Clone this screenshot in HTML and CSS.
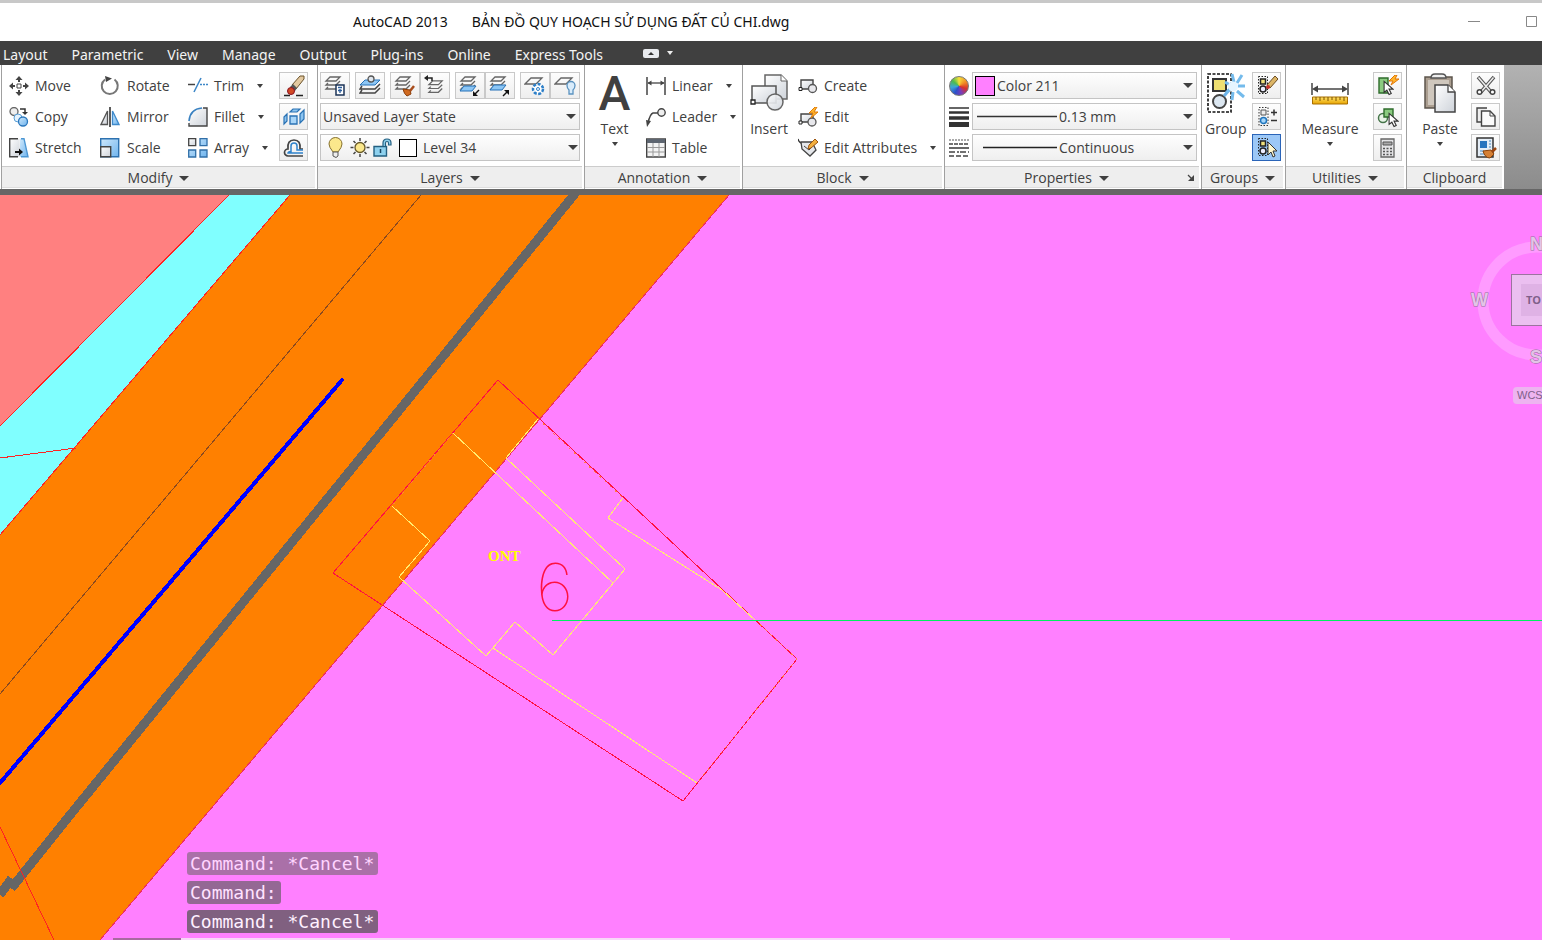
FILE: index.html
```html
<!DOCTYPE html>
<html lang="en">
<head>
<meta charset="utf-8">
<title>AutoCAD 2013</title>
<link rel="stylesheet" href="styles.css">
</head>
<body>
<svg class="defs" aria-hidden="true">
  <defs>
    <linearGradient id="gBlue" x1="0" y1="0" x2="1" y2="1"><stop offset="0" stop-color="#cfe8fb"/><stop offset="1" stop-color="#6fb4ee"/></linearGradient>
    <linearGradient id="gGrey" x1="0" y1="0" x2="1" y2="1"><stop offset="0" stop-color="#ffffff"/><stop offset="1" stop-color="#ced3da"/></linearGradient>
    <linearGradient id="gGold" x1="0" y1="0" x2="0" y2="1"><stop offset="0" stop-color="#ffe26a"/><stop offset="1" stop-color="#e8a400"/></linearGradient>
    <symbol id="sheets" viewBox="0 0 20 20"><path d="M6 2h10l-4 4H2zM4 8l-2 2h10l4-4M4 12l-2 2h10l4-4" fill="none" stroke="#666" stroke-width="1.300"/></symbol>
    <symbol id="cursor" viewBox="0 0 10 14"><path d="M1 1v10l2.500-2 2 4 2-1-2-4H9z" fill="#fff" stroke="#333"/></symbol>
    <symbol id="pick" viewBox="0 0 20 20"><path d="M2.500 1.500h9v17h-9z" fill="none" stroke="#222" stroke-dasharray="1.500 1.500"/><path d="M4.500 4h5v5h-5z" fill="#f0e07a" stroke="#222" stroke-width="1.500"/><circle cx="7" cy="14" r="3" fill="#eef" stroke="#222" stroke-width="1.500"/></symbol>
  </defs>
</svg>
<header class="titlebar">
  <h1 class="title"><span>AutoCAD 2013</span><span>BẢN ĐỒ QUY HOẠCH SỬ DỤNG ĐẤT CỦ CHI.dwg</span></h1>
  <div class="window-buttons">
    <button type="button" aria-label="Minimize"><svg width="12" height="12"><path d="M0 5.500h12" stroke="#888"/></svg></button>
    <button type="button" aria-label="Maximize"><svg width="12" height="12"><path d="M.5.500h10v10H.5z" fill="none" stroke="#888"/></svg></button>
  </div>
</header>
<nav class="tabs">
  <a href="#layout">Layout</a><a href="#parametric">Parametric</a><a href="#view">View</a><a href="#manage">Manage</a><a href="#output">Output</a><a href="#plugins">Plug-ins</a><a href="#online">Online</a><a href="#express">Express Tools</a>
  <button type="button" class="collapse" aria-label="Minimize ribbon"><svg width="16" height="9"><rect width="16" height="9" rx="2" fill="#e8eaee"/><path d="M5 6l3-3 3 3z" fill="#333"/></svg><i class="caret small"></i></button>
</nav>
<main class="workspace">
<div class="ribbon">
  <section class="panel modify">
    <div class="body">
      <div class="column">
        <button type="button" class="tool"><svg width="20" height="20"><path d="M10 3v3M10 14v3M3 10h3M14 10h3" stroke="#444" stroke-width="2"/><path d="M10 0l3.500 4h-7zM10 20l3.500-4h-7zM0 10l4-3.500v7zM20 10l-4-3.500v7z" fill="#444"/><path d="M8 8h4v4H8z" fill="#fff" stroke="#444"/></svg>Move</button>
        <button type="button" class="tool"><svg width="20" height="20"><circle cx="5" cy="4.500" r="4" fill="#eee" stroke="#666" stroke-width="1.300"/><circle cx="9" cy="11" r="4" fill="#e4f2fd" stroke="#5a9fd6"/><circle cx="14" cy="14.500" r="4.500" fill="url(#gBlue)" stroke="#2c78bd" stroke-width="1.300"/><path d="M11 2h5v4" fill="none" stroke="#333" stroke-width="1.500"/><path d="M13 5h6l-3 3z" fill="#333"/></svg>Copy</button>
        <button type="button" class="tool"><svg width="20" height="20"><path d="M.7.700h10v18H.7z" fill="url(#gGrey)"/><path d="M9 .7H.7v18H9" fill="none" stroke="#444" stroke-width="1.400"/><path d="M11 .7h4l4 18h-8z" fill="url(#gBlue)"/><path d="M12 .7h3l4 18h-7" fill="none" stroke="#4c97d4" stroke-width="1.400"/><path d="M6 14h5" stroke="#111" stroke-width="2"/><path d="M10 10.500l4 3.500-4 3.500z" fill="#111"/></svg>Stretch</button>
      </div>
      <div class="column">
        <button type="button" class="tool"><svg width="20" height="20"><path d="M5 3.500A8 8 0 1 0 14.500 3.500" fill="none" stroke="#777" stroke-width="2"/><path d="M5 0l7 2.500-6 3.500z" fill="#444"/></svg>Rotate</button>
        <button type="button" class="tool"><svg width="20" height="20"><path d="M7.500 4v13.500H1z" fill="url(#gGrey)" stroke="#555" stroke-width="1.300"/><path d="M12.500 4v13.500H19z" fill="url(#gBlue)" stroke="#3f8acb" stroke-width="1.300"/><path d="M10 0v20" stroke="#333" stroke-width="1.600"/></svg>Mirror</button>
        <button type="button" class="tool"><svg width="20" height="20"><path d="M.7.700h18v18H.7z" fill="url(#gBlue)" stroke="#2e72b0" stroke-width="1.400"/><path d="M.7 8.700h10v10H.7z" fill="url(#gGrey)" stroke="#444" stroke-width="1.400"/></svg>Scale</button>
      </div>
      <div class="column">
        <button type="button" class="tool"><svg width="20" height="20"><path d="M0 8.500h7" stroke="#444" stroke-width="1.500"/><path d="M6 16L13 2" stroke="#3d87c8" stroke-width="1.500"/><path d="M12 8.500h8" stroke="#3d87c8" stroke-width="1.500" stroke-dasharray="2 1"/></svg>Trim<i class="caret small"></i></button>
        <button type="button" class="tool"><svg width="20" height="20"><path d="M1 19V15Q1 1 15 1h4v18z" fill="url(#gGrey)"/><path d="M1 14Q2 2 14 1" fill="none" stroke="#3981c1" stroke-width="1.600"/><path d="M15 1h4v18H1v-3" fill="none" stroke="#444" stroke-width="1.400"/></svg>Fillet<i class="caret small"></i></button>
        <button type="button" class="tool"><svg width="20" height="20"><path d="M.7.700h7v7h-7z" fill="url(#gGrey)" stroke="#444" stroke-width="1.300"/><path d="M12 .7h7v7h-7zM.7 12h7v7h-7zM12 12h7v7h-7z" fill="url(#gBlue)" stroke="#316fa8" stroke-width="1.300"/></svg>Array<i class="caret small"></i></button>
      </div>
      <div class="column squares">
        <button type="button" class="square" aria-label="Erase"><svg width="22" height="22"><path d="M1 20.500h6M13 20.500h7" stroke="#222" stroke-width="1.300"/><path d="M17 1h4v3l-8 10-4-4z" fill="#e3c9a0" stroke="#6a522a"/><path d="M10 9l4 4-2 3-5-4z" fill="#555"/><circle cx="8" cy="16" r="3.500" fill="#d24a24" stroke="#812"/></svg></button>
        <button type="button" class="square" aria-label="Explode"><svg width="22" height="22"><path d="M7 10h7v8H7z" fill="#a8d5f8" stroke="#2a72b4" stroke-width="1.300"/><path d="M7 6l3-3h7l-3 3zM1 11l3-3v7l-3 3zM17 8l4-4v9l-4 4z" fill="#8cc4f0" stroke="#2a72b4" stroke-width="1.200"/></svg></button>
        <button type="button" class="square" aria-label="Offset"><svg width="22" height="22"><path d="M20 19H5a3.500 3.500 0 0 1 0-7q-1-9 6-9t6 9h3" fill="none" stroke="#444" stroke-width="1.700"/><path d="M20 16H5q0-1 3-1.500V9q0-3 3-3t3 3v4h6" fill="none" stroke="#2f83cb" stroke-width="1.500"/></svg></button>
      </div>
    </div>
    <button type="button" class="caption">Modify<i class="caret"></i></button>
  </section>

  <section class="panel layers">
    <div class="body stack">
      <div class="strip">
        <div class="group"><button type="button" class="square" aria-label="Layer properties"><svg width="22" height="22"><use href="#sheets" width="20" height="20"/><path d="M12 10h8v10h-8z" fill="#fff" stroke="#1c3558" stroke-width="1.500"/><path d="M14 12.500h4M14 15.500h4M16 14v4" stroke="#2a5d9b" stroke-width="1.300"/></svg></button></div>
        <div class="group"><button type="button" class="square" aria-label="Make current"><svg width="22" height="22"><path d="M6 5h15l-5 5H1z" fill="#8cc6f5" stroke="#2571b7"/><circle cx="12" cy="4" r="3" fill="#dfe6ee" stroke="#555" stroke-width="1.300"/><path d="M3 11l-2 3h15l5-5M3 15l-2 3h15l5-5" fill="none" stroke="#444" stroke-width="1.500"/></svg></button></div>
        <div class="group">
          <button type="button" class="square" aria-label="Match layer"><svg width="22" height="22"><use href="#sheets" width="20" height="20"/><path d="M9 14l7 1 1 4-4 2q-3-2-4-7z" fill="#d06a20" stroke="#8a3d0a"/><path d="M16 16l4-5" stroke="#a84c1c" stroke-width="2.500"/></svg></button>
          <button type="button" class="square" aria-label="Layer previous"><svg width="22" height="22"><use href="#sheets" x="3" y="4" width="19" height="19"/><path d="M3 3h5v3" fill="none" stroke="#222" stroke-width="1.500"/><path d="M0 3l4-3v6z" fill="#222"/></svg></button>
        </div>
        <div class="group">
          <button type="button" class="square" aria-label="Isolate"><svg width="22" height="22"><use href="#sheets" width="20" height="20"/><path d="M5 11h12l-4 5H1z" fill="#8cc6f5" stroke="#2571b7"/><path d="M20 15l-4 4" stroke="#111" stroke-width="1.500"/><path d="M14 21v-5l5 5z" fill="#111"/></svg></button>
          <button type="button" class="square" aria-label="Unisolate"><svg width="22" height="22"><use href="#sheets" width="20" height="20"/><path d="M5 10h12l-4 5H1z" fill="#8cc6f5" stroke="#2571b7"/><path d="M14 21l4-4" stroke="#111" stroke-width="1.500"/><path d="M20 15v5l-5-5z" fill="#111"/></svg></button>
        </div>
        <div class="group">
          <button type="button" class="square" aria-label="Freeze"><svg width="22" height="22"><path d="M7 3h11l-6 6H1z" fill="none" stroke="#666" stroke-width="1.300"/><circle cx="14" cy="14" r="5" fill="#fff" stroke="#2d7fc8" stroke-width="2.500" stroke-dasharray="3 1.500"/><circle cx="14" cy="14" r="1.500" fill="none" stroke="#2d7fc8"/></svg></button>
          <button type="button" class="square" aria-label="Layer off"><svg width="22" height="22"><path d="M7 3h11l-6 6H1z" fill="none" stroke="#666" stroke-width="1.300"/><path d="M15 15q-2-2-2-4.500a4 4 0 0 1 8 0q0 2.500-2 4.500v4h-4z" fill="#d9ecfb" stroke="#5b93c0" stroke-width="1.300"/></svg></button>
        </div>
      </div>
      <div class="combo"><select aria-label="Layer state"><option>Unsaved Layer State</option></select><i class="caret"></i></div>
      <div class="combo layer"><svg width="64" height="22"><path d="M5 15Q1 10 1 7a6.500 6.500 0 0 1 13 0q0 3-4 8z" fill="#fbe88c" stroke="#85702e"/><path d="M5 15h5v4l-2 1.500L5 19z" fill="#eee" stroke="#555"/><circle cx="32" cy="10.500" r="5" fill="#fbe88c" stroke="#665828" stroke-width="1.300"/><path d="M32 1v3M32 17v3M22.500 10.500h3M38.500 10.500h3M25.500 4l2 2M36.500 15l2 2M25.500 17l2-2M36.500 6l2-2" stroke="#444" stroke-width="1.500"/><path d="M46 9.500h12.500v9.500H46z" fill="#8ed1ee" stroke="#235f80" stroke-width="1.400"/><path d="M55 9V6q0-4 4-4t4 4v2h-2.500V6q0-1.500-1.500-1.500T57.500 6v3" fill="#8ed1ee" stroke="#235f80" stroke-width="1.200"/><path d="M52.500 12v4" stroke="#1b4660" stroke-width="1.500"/></svg><span class="swatch white"></span><select aria-label="Layer"><option>Level 34</option></select><i class="caret"></i></div>
    </div>
    <button type="button" class="caption">Layers<i class="caret"></i></button>
  </section>

  <section class="panel annotation">
    <div class="body">
      <button type="button" class="big"><span class="picture letter" aria-hidden="true">A</span>Text<i class="caret small"></i></button>
      <div class="column">
        <button type="button" class="tool"><svg width="20" height="20"><path d="M1 1v18M19 1v18" stroke="#444" stroke-width="1.500"/><path d="M2 7h16" stroke="#444" stroke-width="1.300"/><path d="M1.500 7l4-2.500v5zM18.500 7l-4-2.500v5z" fill="#444"/></svg>Linear<i class="caret small"></i></button>
        <button type="button" class="tool"><svg width="20" height="20"><path d="M2 16q2-9 5-10h5" fill="none" stroke="#444" stroke-width="1.500"/><path d="M0 13l5 1-4 6z" fill="#444"/><circle cx="15.500" cy="5.500" r="3.700" fill="#eee" stroke="#444" stroke-width="1.400"/></svg>Leader<i class="caret small"></i></button>
        <button type="button" class="tool"><svg width="20" height="20"><path d="M.7 1h18.600v18H.7z" fill="#f3f3f3" stroke="#444" stroke-width="1.400"/><path d="M1 1h18v4H1z" fill="#5d6570"/><path d="M1 9.500h18M1 14h18M7 5v14M13 5v14" stroke="#999"/></svg>Table</button>
      </div>
    </div>
    <button type="button" class="caption">Annotation<i class="caret"></i></button>
  </section>

  <section class="panel block">
    <div class="body">
      <button type="button" class="big"><svg class="picture" width="38" height="44"><path d="M15 3h16l6 6v18H15z" fill="url(#gGrey)" stroke="#666" stroke-width="1.500"/><path d="M31 3v6h6" fill="#fff" stroke="#666"/><path d="M2 14h24v17H2z" fill="url(#gGrey)" stroke="#555" stroke-width="1.500"/><circle cx="25" cy="30" r="8" fill="url(#gGrey)" fill-opacity=".9" stroke="#666" stroke-width="1.500"/><path d="M1 28h4v4H1z" fill="#fff" stroke="#222" stroke-width="1.300"/></svg>Insert</button>
      <div class="column">
        <button type="button" class="tool"><svg width="20" height="20"><path d="M3 4h12v9H3z" fill="url(#gGrey)" stroke="#444" stroke-width="1.400"/><circle cx="14.500" cy="12.500" r="4" fill="#e8e8ec" stroke="#555" stroke-width="1.300"/><path d="M1 11.500h3v3H1z" fill="#fff" stroke="#222"/></svg>Create</button>
        <button type="button" class="tool"><svg width="20" height="20"><path d="M3 7h12v8H3z" fill="url(#gGrey)" stroke="#444" stroke-width="1.400"/><circle cx="14" cy="15" r="4" fill="#e8e8ec" stroke="#555" stroke-width="1.300"/><path d="M1 14h3v3H1z" fill="#fff" stroke="#222"/><path d="M17 0l-6 6h4l-2 5 7-6h-4l3-5z" fill="#ffb52c" stroke="#de7b0c"/></svg>Edit</button>
        <button type="button" class="tool"><svg width="20" height="20"><path d="M0 1q1 4 5 5" fill="none" stroke="#333" stroke-width="1.400"/><path d="M3 4h11l4 8-6 6-8-7z" fill="#e5e7eb" stroke="#444" stroke-width="1.300"/><path d="M6 8l5 4 3-3" fill="none" stroke="#444"/><path d="M17 1l3 3-7 6-3 1 1-4z" fill="#f2af3e" stroke="#9c5510"/></svg>Edit Attributes<i class="caret small"></i></button>
      </div>
    </div>
    <button type="button" class="caption">Block<i class="caret"></i></button>
  </section>

  <section class="panel properties">
    <div class="body stack">
      <div class="property"><span class="wheel"></span><div class="combo"><span class="swatch pink"></span><select aria-label="Color"><option>Color 211</option></select><i class="caret"></i></div></div>
      <div class="property"><svg width="20" height="20"><path d="M0 1h20" stroke="#333" stroke-width="1.500"/><path d="M0 5.500h20" stroke="#333" stroke-width="2.500"/><path d="M0 11h20" stroke="#333" stroke-width="3.500"/><path d="M0 17.500h20" stroke="#333" stroke-width="5"/></svg><div class="combo"><svg width="84" height="3"><path d="M2 1.500h80" stroke="#333" stroke-width="1.500"/></svg><select aria-label="Lineweight"><option>0.13 mm</option></select><i class="caret"></i></div></div>
      <div class="property"><svg width="20" height="20"><path d="M0 2h20" stroke="#555" stroke-dasharray="2 1"/><path d="M0 6h20" stroke="#444" stroke-width="1.500" stroke-dasharray="4 1"/><path d="M0 10h20" stroke="#333" stroke-width="1.500"/><path d="M0 14h20" stroke="#444" stroke-width="1.500" stroke-dasharray="6 2 2 1"/><path d="M0 18h20" stroke="#444" stroke-width="1.500" stroke-dasharray="5 2"/></svg><div class="combo"><svg width="84" height="3"><path d="M8 1.500h74" stroke="#222" stroke-width="1.500"/></svg><select aria-label="Linetype"><option>Continuous</option></select><i class="caret"></i></div></div>
    </div>
    <div class="caption"><button type="button" class="caption-label">Properties<i class="caret"></i></button><button type="button" class="launcher" aria-label="Properties dialog"><svg width="8" height="8"><path d="M1 1l4 4" stroke="#444" stroke-width="1.300"/><path d="M7 1v6H1z" fill="#444"/></svg></button></div>
  </section>

  <section class="panel groups">
    <div class="body">
      <button type="button" class="big"><svg class="picture" width="40" height="44"><path d="M2 2h23v38H2z" fill="none" stroke="#111" stroke-width="1.600" stroke-dasharray="3 1.500"/><path d="M7 7h13v12H7z" fill="#eedf72" stroke="#333" stroke-width="2"/><circle cx="13.500" cy="29.500" r="6.500" fill="#dce7f1" stroke="#444" stroke-width="2"/><path d="M18 24l6-7" stroke="#6bb2e8" stroke-width="3"/><path d="M26 2l2 8M36 3l-5 8M39 14h-7M38 25l-7-6M26 28l1-8M20 21l4-4M19 10l5 3" stroke="#74bbec" stroke-width="3"/><circle cx="27" cy="14.500" r="5" fill="#e6f5ff"/></svg>Group</button>
      <div class="column squares">
        <button type="button" class="square" aria-label="Ungroup"><svg width="22" height="22"><use href="#pick" width="20" height="20"/><path d="M19 1l3 3-8 9-3-3z" fill="#dcb566" stroke="#6b4c22"/><circle cx="12" cy="12" r="2" fill="#c8312a"/></svg></button>
        <button type="button" class="square" aria-label="Group edit"><svg width="22" height="22"><path d="M3 1.500h9v18H3z" fill="none" stroke="#333" stroke-dasharray="1.500 1.500"/><path d="M5 4h5v5H5z" fill="#eee" stroke="#555"/><circle cx="7.500" cy="14.500" r="3" fill="#a4d5fa" stroke="#1f75bd" stroke-width="1.500"/><path d="M15 6.500h6M18 3.500v6M15 14.500h6" stroke="#333" stroke-width="1.500"/></svg></button>
        <button type="button" class="square active" aria-label="Group selection"><svg width="22" height="22"><use href="#pick" width="20" height="20"/><path d="M12 5v13l3-3 2 5 2-1-2-5h4z" fill="#fff8cf" stroke="#333"/></svg></button>
      </div>
    </div>
    <button type="button" class="caption">Groups<i class="caret"></i></button>
  </section>

  <section class="panel utilities">
    <div class="body">
      <button type="button" class="big"><svg class="picture" width="40" height="44"><path d="M2 11v12M38 11v12" stroke="#444" stroke-width="1.500"/><path d="M4 17h32" stroke="#444" stroke-width="1.500"/><path d="M2 17l6-3.500v7zM38 17l-6-3.500v7z" fill="#444"/><path d="M2.500 25h35v7h-35z" fill="url(#gGold)" stroke="#a86e00"/><path d="M6 25v3M10 25v4M14 25v3M18 25v4M22 25v3M26 25v4M30 25v3M34 25v4" stroke="#7d5200"/></svg>Measure<i class="caret small"></i></button>
      <div class="column squares">
        <button type="button" class="square" aria-label="Quick select"><svg width="22" height="22"><path d="M2 3h9v15H2z" fill="#8bcb80" stroke="#2e6c2b" stroke-width="1.400"/><path d="M18 0l-6 6h4l-2 4 8-6h-4l2-4z" fill="#ffb52c" stroke="#e07505"/><use href="#cursor" x="6" y="5" width="11" height="16"/></svg></button>
        <button type="button" class="square" aria-label="Select all"><svg width="22" height="22"><circle cx="6" cy="12" r="4.500" fill="#e9f4e8" stroke="#46754a" stroke-width="1.500"/><path d="M7 3h9v8H7z" fill="#8bcb80" stroke="#2e6c2b" stroke-width="1.400"/><use href="#cursor" x="11" y="6" width="11" height="16"/></svg></button>
        <button type="button" class="square" aria-label="Calculator"><svg width="22" height="22"><path d="M4 2h13v18H4z" fill="#e4e4e6" stroke="#666" stroke-width="1.300"/><path d="M6 5h9v3H6z" fill="#aaa" stroke="#555"/><path d="M6 11.500h9M6 14.500h9M6 17.500h9" stroke="#555" stroke-width="1.600" stroke-dasharray="2 1.500"/></svg></button>
      </div>
    </div>
    <button type="button" class="caption">Utilities<i class="caret"></i></button>
  </section>

  <section class="panel clipboard">
    <div class="body">
      <button type="button" class="big"><svg class="picture" width="34" height="44"><path d="M2 5h27v31H2z" fill="#ab9e90" stroke="#5d554c" stroke-width="1.500"/><path d="M5 8h21v25H5z" fill="#cfc7bd"/><path d="M8 6q0-4 4-4h7q4 0 4 4z" fill="#eee" stroke="#555" stroke-width="1.500"/><path d="M12 13h13l7 7v20H12z" fill="url(#gGrey)" stroke="#444" stroke-width="1.500"/><path d="M25 13v7h7" fill="#fff" stroke="#444" stroke-width="1.300"/></svg>Paste<i class="caret small"></i></button>
      <div class="column squares">
        <button type="button" class="square" aria-label="Cut"><svg width="22" height="22"><path d="M3 2l13 15M19 2L6 17" stroke="#555" stroke-width="3.500"/><path d="M3.500 2.500l12 14M18.500 2.500l-12 14" stroke="#eee" stroke-width="1.500"/><circle cx="4.500" cy="17" r="2.300" fill="#fff" stroke="#444" stroke-width="1.500"/><circle cx="17.500" cy="17" r="2.300" fill="#fff" stroke="#444" stroke-width="1.500"/></svg></button>
        <button type="button" class="square" aria-label="Copy clip"><svg width="22" height="22"><path d="M12 2H2v14h4" fill="#eee" stroke="#444" stroke-width="1.400"/><path d="M6.500 5H15l5 5v10H6.500z" fill="#fafafa" stroke="#444" stroke-width="1.400"/><path d="M15 5v5h5" fill="none" stroke="#444"/></svg></button>
        <button type="button" class="square" aria-label="Match properties"><svg width="22" height="22"><path d="M2 1h16v19H2z" fill="#e4edf6" stroke="#333" stroke-width="1.500"/><path d="M5 4h7v7H5z" fill="#2874bd"/><path d="M14 4h2M14 7h2M14 10h2M5 14h4M5 17h4" stroke="#4785bb"/><path d="M8 14l8-1 3 4-4 4q-5 0-7-7z" fill="#d58035" stroke="#8a4209"/><path d="M17 15l4-4" stroke="#9c4510" stroke-width="2.500"/></svg></button>
      </div>
    </div>
    <button type="button" class="caption">Clipboard</button>
  </section>
  <div class="ribbon-rest"></div>
</div>

<div class="canvas">
  <svg class="map" viewBox="0 195 1542 745" preserveAspectRatio="xMinYMin slice" role="img" aria-label="Land use plan">
    <g shape-rendering="crispEdges">
      <rect y="195" width="1542" height="745" fill="#ff80ff"/>
      <path d="M0 195h230L0 427z" fill="#ff8080"/>
      <path d="M229 195h61L0 535V426z" fill="#80ffff"/>
      <path d="M290 195h439L100 940H0V535z" fill="#ff8000"/>
      <g fill="none" stroke="#f22" stroke-width="1">
        <path d="M229 195L0 426M290 195L0 535M0 458l76-10"/>
        <path d="M729 195L100 940" stroke="#f0305a"/>
      </g>
      <path d="M421 195L0 694" stroke="#8a4a20" fill="none"/>
      <path d="M582 185L432 370 66 820 14 885 9 882 0 895" stroke="#666" stroke-width="9" fill="none"/>
      <path d="M0 827l54 113" stroke="#f22" fill="none"/>
      <path d="M342 380L0 783" stroke="#00f" stroke-width="4" stroke-linecap="round" fill="none"/>
      <path d="M498 380L797 659 683 801 333 573z" stroke="#ff1040" fill="none"/>
      <path d="M453 433l160 150M538 419l-32 39 119 111-72 86-38-33-29 34-87-79 31-36-38-35M493 648l204 135M623 498l-15 20 114 72 33 30" stroke="#ffee70" fill="none"/>
      <path d="M538 419l85 79M797 659L697 783M755 620l42 39M453 433l-61 73" stroke="#ff8040" stroke-dasharray="2 5" fill="none"/>
      <path d="M552 620.500h990" stroke="#00f060" stroke-width="1" fill="none"/>
    </g>
    <text x="488" y="561" class="zone">ONT</text>
    <text x="536" y="611" class="parcel">6</text>
  </svg>
  <svg class="viewcube" width="82" height="180" viewBox="1460 235 82 180" role="img" aria-label="View cube">
    <circle cx="1537" cy="301" r="54" fill="none" stroke="#ff9bff" stroke-width="11"/>
    <rect x="1511.500" y="274.500" width="50" height="51" fill="#ebbff0" stroke="#9b739f"/>
    <rect x="1521" y="284" width="40" height="32" fill="#dfb2e5"/>
    <text x="1526" y="304" class="face">TO</text>
    <text x="1530" y="250" class="compass">N</text>
    <text x="1471" y="306" class="compass">W</text>
    <text x="1530" y="363" class="compass">S</text>
    <rect x="1513" y="387" width="34" height="17" rx="4" fill="#edb4f0"/>
    <text x="1517" y="399" class="wcs">WCS</text>
  </svg>
  <div class="history">
    <p class="old">Command: *Cancel*</p>
    <p class="mid">Command:</p>
    <p>Command: *Cancel*</p>
  </div>
  <div class="command-edge"></div>
</div>
</main>
</body>
</html>
```
FILE: styles.css
```css
* { box-sizing: border-box; }
body {
  margin: 0;
  height: 100vh;
  display: flex;
  flex-direction: column;
  overflow: hidden;
  font: 14px/20px "Open Sans", "Noto Sans", sans-serif;
  color: #404040;
}
button, select { font: inherit; color: inherit; border: 0; padding: 0; margin: 0; background: none; }
svg { display: block; flex: none; }
.defs { position: absolute; width: 0; height: 0; }

.titlebar {
  display: flex;
  align-items: center;
  justify-content: space-between;
  height: 41px;
  flex: none;
  border-top: 3px solid #c8c8c8;
  background: #fff;
  padding-left: 353px;
}
.title { display: flex; gap: 24px; margin: 0; font: 400 14px/20px "Noto Sans", sans-serif; color: #111; white-space: nowrap; }
.window-buttons { display: flex; gap: 46px; padding-right: 4px; }

.tabs { display: flex; align-items: center; gap: 24px; height: 24px; flex: none; padding: 3px 3px 0; background: #404040; font-family: "Noto Sans", sans-serif; }
.tabs a { color: #f4f4f4; text-decoration: none; white-space: nowrap; }
.collapse { display: flex; align-items: center; gap: 8px; padding: 0 0 3px 16px; color: #eee; }

.workspace { flex: 1; display: flex; flex-direction: column; min-height: 0; }
.ribbon { display: flex; flex: none; height: 130px; border-bottom: 6px solid #666; background: #fff; }
.panel { display: flex; flex-direction: column; flex: none; border-left: 1px solid #a0a0a0; padding-bottom: 1px; }
.modify { width: 316px; margin-left: 1px; }
.layers { width: 267px; }
.annotation { width: 158px; }
.block { width: 202px; }
.properties { width: 257px; }
.groups { width: 84px; }
.utilities { width: 121px; }
.clipboard { width: 98px; }
.ribbon-rest { flex: 1; background: linear-gradient(#b2b2b2, #8c8c8c); }

.body { display: flex; flex: 1; padding: 5px 4px 0; }
.stack { flex-direction: column; gap: 4px; padding: 7px 4px 0 2px; }
.column { display: grid; grid-template-rows: repeat(3, 31px); align-items: center; justify-items: start; }
.squares { margin-left: auto; }
.tool { display: flex; align-items: center; gap: 6px; white-space: nowrap; }
.tool .caret { margin-left: 7px; }
.modify .body { padding: 5px 9px 0 7px; }
.modify .column:nth-child(1) { width: 91px; }
.modify .column:nth-child(2) { width: 88px; }
.modify .column:nth-child(2) .tool { gap: 7px; }

.caret { width: 0; height: 0; flex: none; border: 5px solid transparent; border-top-color: currentColor; border-bottom: 0; }
.caret.small { border-width: 4px 3px 0; }
.caption {
  display: flex;
  align-items: center;
  justify-content: center;
  gap: 7px;
  height: 22px;
  padding-top: 2px;
  border-top: 1px solid #ccc;
  border-bottom: 1px solid #ddd;
  background: #eee;
  margin-right: 2px;
}
.caption-label { display: flex; align-items: center; gap: 7px; margin: 0 auto; padding-left: 8px; }
.launcher { padding-right: 4px; }

.square {
  display: grid;
  place-items: center;
  width: 29px;
  height: 27px;
  border: 1px solid #c9c9c9;
  background: linear-gradient(#fdfdfd, #eee);
}
.square.active { border-color: #2a64b8; background: #9cc8f7; }
.strip { display: flex; gap: 5px; height: 27px; }
.strip .square { width: 30px; }
.group { display: flex; }

.combo {
  display: flex;
  align-items: center;
  flex: 1;
  height: 27px;
  max-height: 27px;
  min-width: 0;
  border: 1px solid #c4c4c4;
  background: linear-gradient(#fefefe, #efefef);
  padding: 0 3px 0 2px;
}
.combo select { flex: 1; min-width: 0; height: 25px; appearance: none; }
.combo.layer { padding: 0 1px 0 7px; }
.stack > .combo { flex: none; }
.swatch { flex: none; width: 20px; height: 20px; border: 1px solid #000; }
.swatch.white { width: 18px; height: 18px; background: #fff; margin: 0 6px 0 7px; }
.swatch.pink { background: #ff80ff; margin-right: 2px; }
.property { display: flex; align-items: center; gap: 3px; padding-left: 2px; }
.wheel {
  width: 20px;
  height: 20px;
  border-radius: 50%;
  border: 1px solid #777;
  background: conic-gradient(#f6e03a, #f08a25 60deg, #d8302c 110deg, #7b3dbb 160deg, #2c4fc8 210deg, #3ca5d8 260deg, #4dbb4d 310deg, #f6e03a);
}

.big { display: flex; flex-direction: column; align-items: center; padding-top: 2px; }
.picture { height: 44px; margin-bottom: 3px; }
.letter { font: 500 48px/44px Roboto, sans-serif; }
.big .caret { margin-top: 3px; }
.annotation .body { gap: 9px; }
.annotation .big { width: 45px; margin-left: 3px; }
.block .big { width: 44px; }
.block .body { gap: 7px; }
.utilities .big { width: 80px; }
.clipboard .big { width: 58px; }
.groups .body { padding-left: 3px; }
.utilities .body { padding-left: 4px; }

.canvas { position: relative; flex: 1; min-height: 0; overflow: hidden; background: #ff80ff; }
.map { width: 100%; height: 100%; }
.zone { font: bold 15px "Liberation Serif", serif; fill: #ff0; }
.parcel { font: 100 66px Inter, sans-serif; fill: #ff1040; }
.viewcube { position: absolute; right: 0; top: 40px; }
.compass { font: bold 18px "Liberation Sans", sans-serif; fill: #e2c4e6; stroke: #94709a; stroke-width: 1px; paint-order: stroke; }
.face { font: bold 11px "Open Sans", sans-serif; fill: #80608a; }
.wcs { font: 11px "Liberation Sans", sans-serif; fill: #80608a; }
.history {
  position: absolute;
  left: 187px;
  bottom: 7px;
  display: flex;
  flex-direction: column;
  align-items: flex-start;
  gap: 6px;
  font: 18px/23px "DejaVu Sans Mono", monospace;
  color: #fff0ff;
}
.history p { margin: 0; padding: 0 4px 0 3px; border-radius: 3px; background: #806080; }
.history .old { background: #aa70a8; color: #ffd4ff; }
.history .mid { background: #946894; color: #ffe2ff; }
.command-edge { position: absolute; left: 113px; right: 312px; bottom: 0; height: 2px; background: linear-gradient(90deg, #a86aa0 68px, #f8d8f8 68px); }
```
